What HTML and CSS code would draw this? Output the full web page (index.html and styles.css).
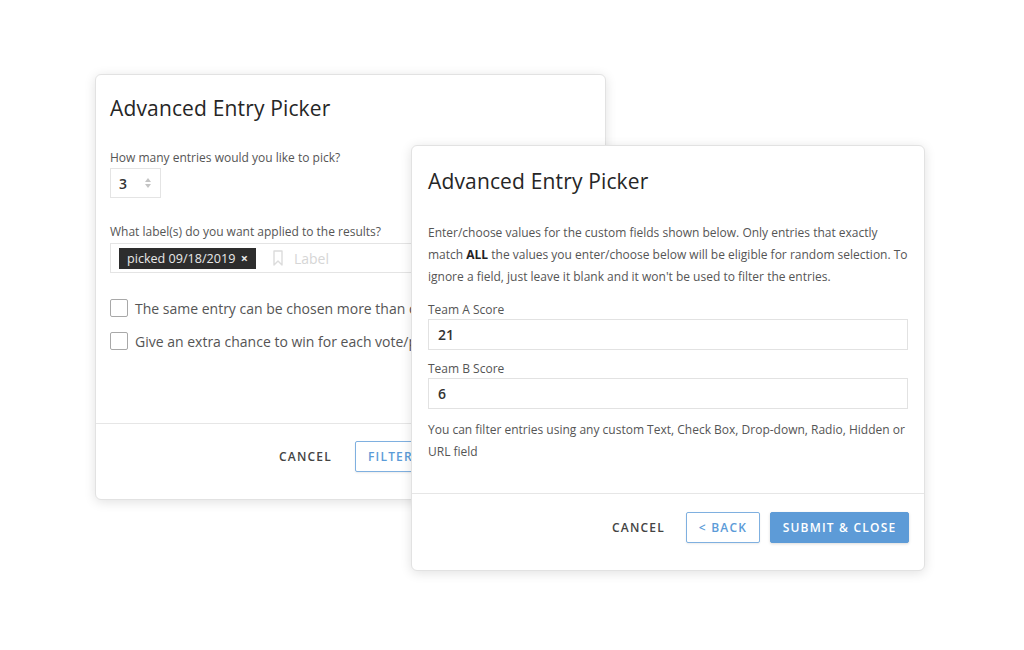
FILE: index.html
```html
<!DOCTYPE html>
<html lang="en">
<head>
<meta charset="utf-8">
<title>Advanced Entry Picker</title>
<link rel="stylesheet" href="styles.css">
</head>
<body>
<div class="stage">
  <section class="card card-back">
    <div class="card-body">
      <h2 class="title">Advanced Entry Picker</h2>
      <label class="field-label">How many entries would you like to pick?</label>
      <div class="num-input">
        <span class="num-value">3</span>
        <span class="spinner"><span class="tri up"></span><span class="tri down"></span></span>
      </div>
      <label class="field-label label-gap">What label(s) do you want applied to the results?</label>
      <div class="tag-input">
        <span class="chip">picked 09/18/2019 <span class="chip-x">×</span></span>
        <svg class="bookmark" width="10" height="16" viewBox="0 0 10 16"><path d="M1 1h8v14l-4-4-4 4z" fill="none" stroke="#dcdcdc" stroke-width="1.4" stroke-linejoin="round"/></svg>
        <span class="placeholder">Label</span>
      </div>
      <div class="check-row first">
        <span class="checkbox"></span>
        <span class="check-text">The same entry can be chosen more than once</span>
      </div>
      <div class="check-row">
        <span class="checkbox"></span>
        <span class="check-text">Give an extra chance to win for each vote/point received</span>
      </div>
    </div>
    <div class="card-footer back-footer">
      <button class="btn btn-text">CANCEL</button>
      <button class="btn btn-outline btn-filter">FILTER BY CUSTOM FIELDS</button>
    </div>
  </section>

  <section class="card card-front">
    <div class="card-body front-body">
      <h2 class="title">Advanced Entry Picker</h2>
      <p class="para">Enter/choose values for the custom fields shown below. Only entries that exactly match <b>ALL</b> the values you enter/choose below will be eligible for random selection. To ignore a field, just leave it blank and it won't be used to filter the entries.</p>
      <label class="field-label team-label">Team A Score</label>
      <div class="text-input">21</div>
      <label class="field-label team-label second">Team B Score</label>
      <div class="text-input">6</div>
      <p class="para note">You can filter entries using any custom Text, Check Box, Drop-down, Radio, Hidden or URL field</p>
    </div>
    <div class="card-footer front-footer">
      <button class="btn btn-text">CANCEL</button>
      <button class="btn btn-outline btn-back">&lt; BACK</button>
      <button class="btn btn-primary">SUBMIT &amp; CLOSE</button>
    </div>
  </section>
</div>
</body>
</html>
```

FILE: styles.css
```css
* { box-sizing: border-box; }
html, body {
  margin: 0;
  padding: 0;
  background: #ffffff;
  font-family: "Open Sans", "Noto Sans", "Liberation Sans", sans-serif;
  color: #555;
}
.stage {
  position: relative;
  width: 1024px;
  height: 650px;
  overflow: hidden;
}
.card {
  position: absolute;
  background: #fff;
  border: 1px solid #e2e2e2;
  border-radius: 6px;
  box-shadow: 0 2px 12px rgba(0,0,0,0.12);
  display: flex;
  flex-direction: column;
  overflow: hidden;
}
.card-back {
  left: 95px;
  top: 74px;
  width: 511px;
  height: 426px;
}
.card-front {
  left: 411px;
  top: 145px;
  width: 514px;
  height: 426px;
}
.card-body {
  flex: 1;
  display: flex;
  flex-direction: column;
  align-items: flex-start;
  padding: 19px 15px 0 14px;
}
.front-body {
  padding: 21px 16px 0 16px;
  align-items: stretch;
}
.title {
  margin: 0;
  font-size: 21px;
  line-height: 28px;
  font-weight: 400;
  color: #262626;
  letter-spacing: 0.15px;
}
.field-label {
  display: block;
  margin-top: 27px;
  font-size: 12px;
  line-height: 18px;
  color: #555;
}
.label-gap { margin-top: 25px; }
.num-input {
  margin-top: 1px;
  width: 51px;
  height: 30px;
  border: 1px solid #e4e4e4;
  display: flex;
  align-items: center;
  padding-left: 8px;
  gap: 18px;
}
.num-value {
  font-size: 14px;
  font-weight: 600;
  color: #333;
}
.spinner {
  display: flex;
  flex-direction: column;
  gap: 2px;
}
.tri {
  width: 0;
  height: 0;
  border-left: 3px solid transparent;
  border-right: 3px solid transparent;
}
.tri.up { border-bottom: 4px solid #c4c4c4; }
.tri.down { border-top: 4px solid #c4c4c4; }
.tag-input {
  margin-top: 2px;
  width: 480px;
  height: 30px;
  border: 1px solid #e4e4e4;
  display: flex;
  align-items: center;
  padding-left: 8px;
}
.chip {
  background: #2d2d2d;
  color: #e8e8e8;
  font-size: 12.6px;
  line-height: 21px;
  height: 21px;
  padding: 0 8px 0 8px;
  white-space: nowrap;
}
.chip-x {
  font-weight: 700;
  margin-left: 2px;
}
.bookmark {
  margin-left: 17px;
}
.placeholder {
  margin-left: 11px;
  font-size: 14px;
  color: #d6d6d6;
}
.check-row {
  display: flex;
  align-items: center;
  gap: 7px;
  height: 20px;
  margin-top: 13px;
  white-space: nowrap;
}
.check-row.first { margin-top: 25px; }
.checkbox {
  width: 18px;
  height: 18px;
  border: 1px solid #a8a8a8;
  border-radius: 2px;
  flex: none;
}
.check-text {
  font-size: 14px;
  color: #555;
}
.card-footer {
  display: flex;
  align-items: flex-start;
  border-top: 1px solid #e6e6e6;
}
.back-footer {
  height: 76px;
  padding: 17px 0 0 160px;
  gap: 0;
}
.front-footer {
  height: 77px;
  padding: 18px 15px 0 0;
  justify-content: flex-end;
  gap: 10px;
}
.btn {
  font-family: inherit;
  font-size: 12px;
  font-weight: 600;
  letter-spacing: 1.2px;
  height: 31px;
  border-radius: 2px;
  background: transparent;
  border: 1px solid transparent;
  white-space: nowrap;
  cursor: pointer;
  flex: none;
}
.btn-text {
  color: #444;
  padding: 0 22px;
}
.front-footer .btn-text { padding: 0 10px 0 21px; }
.btn-outline {
  color: #5b9bd8;
  border-color: #7fb0e0;
  background: #fff;
  padding: 0 12px;
  box-shadow: 0 1px 2px rgba(0,0,0,0.08);
}
.btn-back {
  width: 74px;
  padding: 0;
}
.btn-primary {
  background: #5d9bd7;
  border-color: #5d9bd7;
  color: #fff;
  width: 139px;
  padding: 0;
  box-shadow: 0 1px 3px rgba(0,0,0,0.15);
}
.para {
  margin: 27px 0 0 0;
  font-size: 12px;
  line-height: 22px;
  color: #555;
}
.para b {
  color: #222;
  font-weight: 700;
}
.team-label { margin-top: 13px; }
.team-label.second { margin-top: 10px; }
.text-input {
  margin-top: 0;
  height: 31px;
  border: 1px solid #e2e2e2;
  padding-left: 9px;
  font-size: 14px;
  line-height: 29px;
  font-weight: 600;
  color: #333;
}
.note { margin-top: 10px; }
```
